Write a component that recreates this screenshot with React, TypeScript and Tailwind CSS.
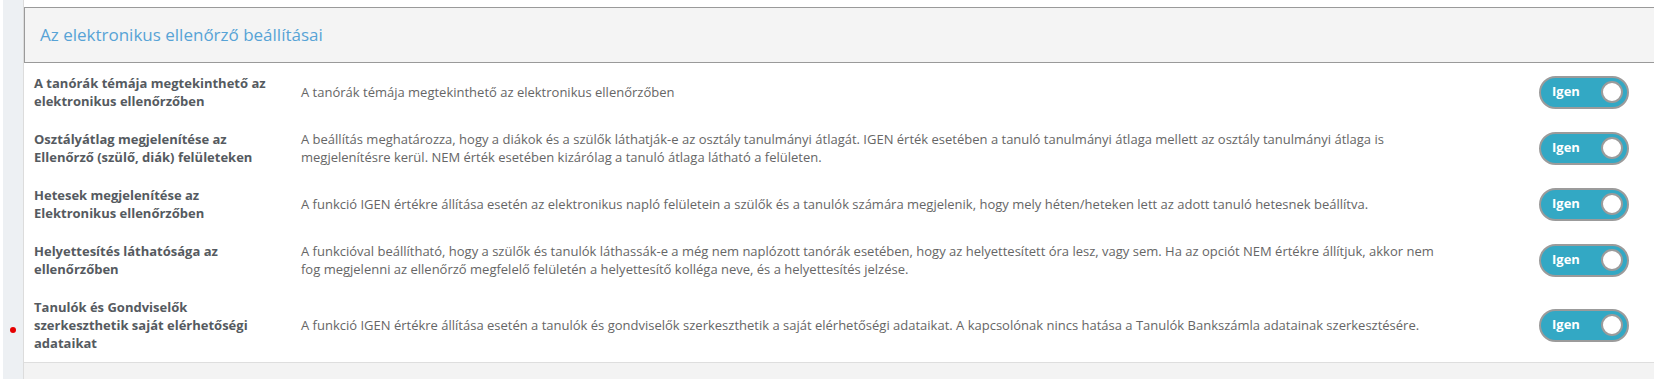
import React from "react";

type Setting = {
  label: string;
  description: string;
  value: boolean;
};

const settings: Setting[] = [
  {
    label: "A tanórák témája megtekinthető az elektronikus ellenőrzőben",
    description: "A tanórák témája megtekinthető az elektronikus ellenőrzőben",
    value: true,
  },
  {
    label: "Osztályátlag megjelenítése az Ellenőrző (szülő, diák) felületeken",
    description:
      "A beállítás meghatározza, hogy a diákok és a szülők láthatják-e az osztály tanulmányi átlagát. IGEN érték esetében a tanuló tanulmányi átlaga mellett az osztály tanulmányi átlaga is megjelenítésre kerül. NEM érték esetében kizárólag a tanuló átlaga látható a felületen.",
    value: true,
  },
  {
    label: "Hetesek megjelenítése az Elektronikus ellenőrzőben",
    description:
      "A funkció IGEN értékre állítása esetén az elektronikus napló felületein a szülők és a tanulók számára megjelenik, hogy mely héten/heteken lett az adott tanuló hetesnek beállítva.",
    value: true,
  },
  {
    label: "Helyettesítés láthatósága az ellenőrzőben",
    description:
      "A funkcióval beállítható, hogy a szülők és tanulók láthassák-e a még nem naplózott tanórák esetében, hogy az helyettesített óra lesz, vagy sem. Ha az opciót NEM értékre állítjuk, akkor nem fog megjelenni az ellenőrző megfelelő felületén a helyettesítő kolléga neve, és a helyettesítés jelzése.",
    value: true,
  },
  {
    label: "Tanulók és Gondviselők szerkeszthetik saját elérhetőségi adataikat",
    description:
      "A funkció IGEN értékre állítása esetén a tanulók és gondviselők szerkeszthetik a saját elérhetőségi adataikat. A kapcsolónak nincs hatása a Tanulók Bankszámla adatainak szerkesztésére.",
    value: true,
  },
];

function Toggle({ on }: { on: boolean }) {
  return (
    <div className="flex h-[33px] w-[90px] items-center justify-between rounded-full border-2 border-[#9b9b9b] bg-[#33a8c4] pl-[11px] pr-[4px]">
      <span className="text-[13px] font-bold text-white">{on ? "Igen" : "Nem"}</span>
      <div className="h-[22px] w-[22px] rounded-full border-2 border-[#9b9b9b] bg-white" />
    </div>
  );
}

export default function App() {
  return (
    <div className="relative flex h-[379px] w-[1654px] overflow-hidden bg-white font-['Open_Sans',sans-serif]">
      {/* left gutter */}
      <div className="w-[24px] shrink-0 border-l-[3px] border-r border-l-white border-r-[#dcdcdc] bg-[#edf0f3]" />

      <div className="flex flex-1 flex-col pt-[7px]">
        {/* panel header */}
        <div className="flex h-[56px] items-center border-y border-l border-[#9a9a9a] bg-[#f4f4f4] pl-[15px]">
          <h2 className="text-[17px] text-[#57a3d6]">Az elektronikus ellenőrző beállításai</h2>
        </div>

        {/* settings rows */}
        <div className="border-b border-[#dedede] pt-[1px]">
          {settings.map((s) => (
            <div key={s.label} className="flex items-center py-[10px] pl-[10px] pr-[25px]">
              <div className="w-[244px] shrink-0 text-[13px] font-bold leading-[18px] text-[#555a60]">
                {s.label}
              </div>
              <div className="ml-[23px] w-[1140px] text-[13px] leading-[18px] text-[#666666]">
                {s.description}
              </div>
              <div className="ml-auto">
                <Toggle on={s.value} />
              </div>
            </div>
          ))}
        </div>

        <div className="flex-1 bg-[#f3f3f3]" />
      </div>

      {/* red marker */}
      <div className="absolute left-[10px] top-[327px] h-[6px] w-[6px] rounded-full bg-[#e60000]" />
    </div>
  );
}
